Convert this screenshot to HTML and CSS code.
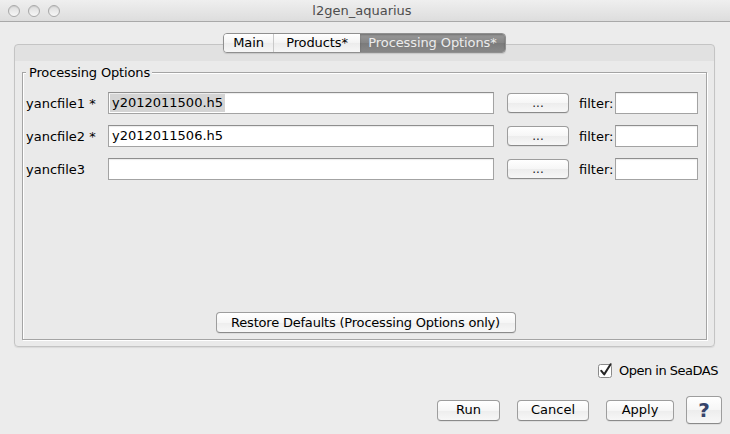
FILE: index.html
```html
<!DOCTYPE html>
<html>
<head>
<meta charset="utf-8">
<title>l2gen_aquarius</title>
<link rel="stylesheet" href="styles.css">
</head>
<body>
<div class="window">
  <div class="titlebar">
    <div class="lights">
      <span class="light"></span><span class="light"></span><span class="light"></span>
    </div>
    <div class="title">l2gen_aquarius</div>
    <div></div>
  </div>
  <div class="content">
    <div class="tabs">
      <div class="tabgroup">
        <div class="tab tab-main">Main</div>
        <div class="tab tab-products">Products*</div>
        <div class="tab tab-proc selected">Processing Options*</div>
      </div>
    </div>
    <div class="panel">
      <div class="group">
        <div class="group-title">Processing Options</div>
        <div class="rows">
          <div class="row">
            <div class="label">yancfile1 *</div>
            <div class="field"><span class="sel">y2012011500.h5</span></div>
            <button class="btn browse">...</button>
            <div class="filter-label">filter:</div>
            <div class="field filter"></div>
          </div>
          <div class="row">
            <div class="label">yancfile2 *</div>
            <div class="field"><span class="val">y2012011506.h5</span></div>
            <button class="btn browse">...</button>
            <div class="filter-label">filter:</div>
            <div class="field filter"></div>
          </div>
          <div class="row">
            <div class="label">yancfile3</div>
            <div class="field"></div>
            <button class="btn browse">...</button>
            <div class="filter-label">filter:</div>
            <div class="field filter"></div>
          </div>
        </div>
        <button class="btn restore">Restore Defaults (Processing Options only)</button>
      </div>
    </div>
    <div class="check-row">
      <svg class="checkbox" width="15" height="15" viewBox="0 0 15 15">
        <rect x="0.5" y="1.5" width="13" height="13" rx="2" ry="2" fill="#ffffff" stroke="#8a8a8a"/>
        <path d="M3.3 7.8 L6.2 11.4 L12.6 1.2" fill="none" stroke="#262626" stroke-width="2" stroke-linejoin="round" stroke-linecap="round"/>
      </svg>
      <span class="check-label">Open in SeaDAS</span>
    </div>
    <div class="actions">
      <button class="btn act run">Run</button>
      <button class="btn act cancel">Cancel</button>
      <button class="btn act apply">Apply</button>
      <button class="btn help">?</button>
    </div>
  </div>
</div>
</body>
</html>
```
FILE: styles.css
```css
html, body {
  margin: 0;
  padding: 0;
}
body {
  width: 730px;
  height: 434px;
  overflow: hidden;
  background: #ececec;
  font-family: "DejaVu Sans", "Liberation Sans", sans-serif;
  font-size: 13px;
  color: #000;
}
.window {
  width: 730px;
  height: 434px;
  background: #ececec;
}
.titlebar {
  height: 21px;
  border-bottom: 1px solid #a9a9a9;
  background: linear-gradient(#efefef, #dddddd);
  display: grid;
  grid-template-columns: 1fr auto 1fr;
  align-items: center;
}
.lights {
  display: flex;
  gap: 8px;
  padding-left: 8px;
  align-items: center;
}
.light {
  width: 10px;
  height: 10px;
  border-radius: 50%;
  border: 1px solid #a9a9a9;
  background: linear-gradient(#dcdcdc, #f7f7f7);
  box-shadow: inset 0 1px 1px rgba(0,0,0,0.08);
}
.title {
  color: #4d4d4d;
  font-size: 13px;
  line-height: 16px;
  margin-right: 6px;
}
.content {
  padding-top: 11px;
}
.tabs {
  display: flex;
  justify-content: center;
  margin: 0 15px 0 14px;
  position: relative;
  z-index: 1;
}
.tabgroup {
  display: flex;
  height: 18px;
  border: 1px solid #8f8f8f;
  border-radius: 4px;
  overflow: hidden;
  box-shadow: 0 1px 1px rgba(0,0,0,0.12);
}
.tab {
  display: flex;
  align-items: center;
  justify-content: center;
  background: linear-gradient(#ffffff, #f3f3f3 50%, #ececec 51%, #f6f6f6);
  line-height: 18px;
  letter-spacing: -0.1px;
}
.tab-main {
  width: 49px;
  border-right: 1px solid #c9c9c9;
}
.tab-products {
  width: 86px;
}
.tab-proc {
  width: 145px;
}
.tab.selected {
  background: linear-gradient(#9a9a9a, #858585 50%, #7b7b7b 51%, #888888);
  color: #ececec;
  box-shadow: inset 0 1px 2px rgba(0,0,0,0.25);
}
.panel {
  margin: -9px 15px 0 14px;
  height: 303px;
  box-sizing: border-box;
  border: 1px solid #c4c4c4;
  border-radius: 4px;
  background: linear-gradient(#e1e1e1 0, #e1e1e1 16px, #eaeaea 16px);
  padding: 27px 7px 6px 7px;
  box-shadow: 0 1px 1px rgba(0,0,0,0.08);
}
.group {
  height: 268px;
  box-sizing: border-box;
  border: 1px solid #a4a4a4;
  box-shadow: inset 1px 1px 0 #ffffff, 1px 1px 0 #ffffff;
  display: flex;
  flex-direction: column;
  padding: 0 7px 6px 3px;
}
.group-title {
  align-self: flex-start;
  margin: -8px 0 0 0;
  padding: 0 2px 0 3px;
  line-height: 16px;
  background: #eaeaea;
  letter-spacing: -0.15px;
}
.rows {
  margin-top: 11px;
  display: flex;
  flex-direction: column;
  gap: 11px;
}
.row {
  display: flex;
  align-items: center;
  height: 22px;
}
.label {
  width: 82px;
  flex: none;
  white-space: pre;
}
.field {
  width: 386px;
  height: 22px;
  box-sizing: border-box;
  flex: none;
  background: #ffffff;
  border: 1px solid #a3a3a3;
  border-top-color: #8e8e8e;
  box-shadow: inset 0 1px 1px rgba(0,0,0,0.08);
  display: flex;
  align-items: center;
  padding-left: 1px;
}
.field .sel {
  background: #d4d4d4;
  padding: 1px 2px;
  line-height: 16px;
}
.field .val {
  padding: 1px 2px;
  line-height: 16px;
}
.field.filter {
  width: 83px;
}
.btn {
  font-family: "DejaVu Sans", "Liberation Sans", sans-serif;
  font-size: 13px;
  color: #000;
  padding: 0;
  margin: 0;
  height: 21px;
  box-sizing: border-box;
  border: 1px solid #9d9d9d;
  border-bottom-color: #8a8a8a;
  border-radius: 4px;
  background: linear-gradient(#ffffff, #f6f6f6 50%, #ededed 51%, #f7f7f7);
  box-shadow: 0 1px 0 rgba(0,0,0,0.06);
  line-height: 18px;
}
.browse {
  width: 62px;
  height: 20px;
  margin-left: 13px;
  flex: none;
  font-size: 12px;
  line-height: 16px;
  color: #222;
}
.filter-label {
  margin-left: 10px;
  margin-right: 2px;
  flex: none;
}
.restore {
  width: 300px;
  margin-top: auto;
  align-self: center;
  margin-left: 6px;
  letter-spacing: -0.2px;
}
.check-row {
  display: flex;
  justify-content: flex-end;
  align-items: center;
  height: 15px;
  margin-top: 16px;
  padding-right: 12px;
}
.checkbox {
  display: block;
  margin-right: 6px;
}
.check-label {
  line-height: 16px;
  letter-spacing: -0.5px;
}
.actions {
  display: flex;
  justify-content: flex-end;
  align-items: center;
  height: 28px;
  margin-top: 18px;
  padding-right: 8px;
}
.act {
  margin-right: 17px;
}
.run { width: 63px; }
.cancel { width: 72px; }
.apply { width: 68px; margin-right: 12px; }
.help {
  width: 36px;
  height: 28px;
  font-weight: bold;
  font-size: 20px;
  line-height: 24px;
  color: #36436a;
}
```
